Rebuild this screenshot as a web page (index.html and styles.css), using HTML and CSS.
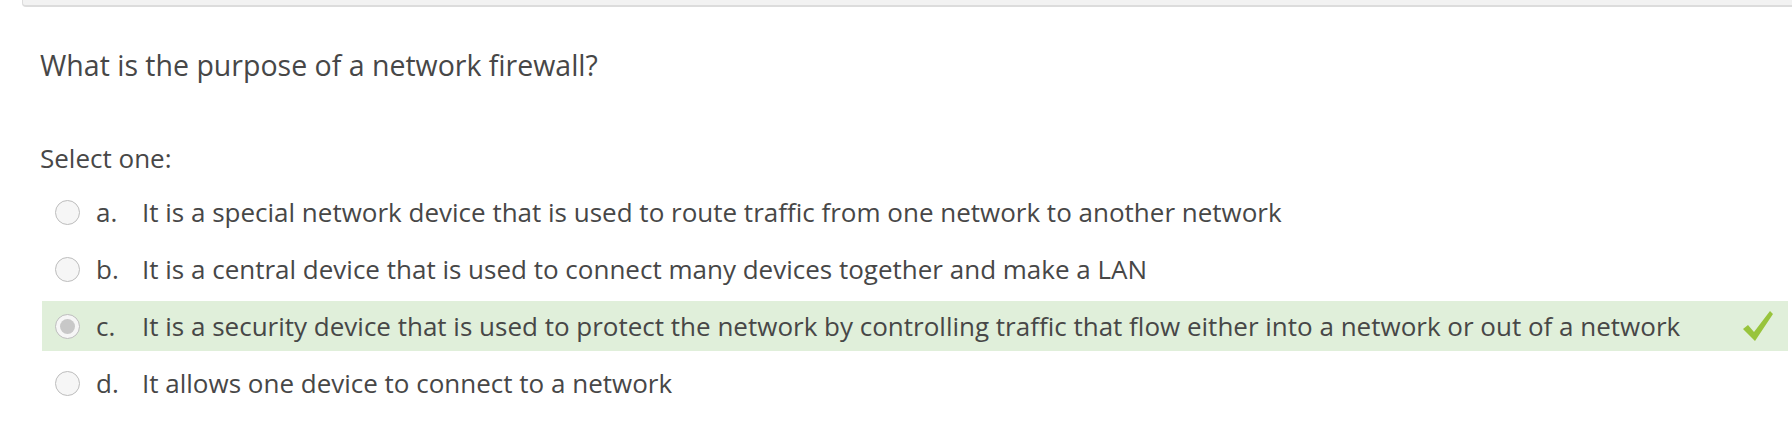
FILE: index.html
```html
<!DOCTYPE html>
<html>
<head>
<meta charset="utf-8">
<link rel="stylesheet" href="styles.css">
</head>
<body>
<div class="topbar"></div>
<div class="content">
  <div class="qtext">What is the purpose of a network firewall?</div>
  <div class="prompt">Select one:</div>
  <div class="answers">
    <div class="answer">
      <span class="radio"></span><span class="label">a.</span><span class="txt">It is a special network device that is used to route traffic from one network to another network</span>
    </div>
    <div class="answer">
      <span class="radio"></span><span class="label">b.</span><span class="txt">It is a central device that is used to connect many devices together and make a LAN</span>
    </div>
    <div class="answer correct">
      <span class="radio checked"></span><span class="label">c.</span><span class="txt">It is a security device that is used to protect the network by controlling traffic that flow either into a network or out of a network</span>
      <svg class="tick" width="32" height="32" viewBox="0 0 32 32"><path d="M1 19 L6 15 L12 22 L28 1 L31 4 L13 31 Z" fill="#98c43c"/></svg>
    </div>
    <div class="answer">
      <span class="radio"></span><span class="label">d.</span><span class="txt">It allows one device to connect to a network</span>
    </div>
  </div>
</div>
</body>
</html>
```
FILE: styles.css
```css
html, body {
  margin: 0;
  padding: 0;
  background: #fff;
}
body {
  font-family: "Open Sans", "Liberation Sans", sans-serif;
  color: #474747;
}
.topbar {
  margin-left: 22px;
  height: 5px;
  background: #f2f2f2;
  border-left: 1px solid #dcdcdc;
  border-bottom: 2px solid #dcdcdc;
  border-bottom-left-radius: 4px;
}
.content {
  padding-left: 40px;
}
.qtext {
  font-size: 28.5px;
  line-height: 40px;
  margin-top: 38px;
}
.prompt {
  font-size: 26px;
  line-height: 36px;
  margin-top: 55px;
}
.answers {
  display: flex;
  flex-direction: column;
  gap: 7px;
  margin-top: 11px;
  margin-left: 2px;
  margin-right: 4px;
}
.answer {
  display: flex;
  align-items: center;
  height: 50px;
  padding-left: 13px;
  font-size: 26px;
}
.answer.correct {
  background: #e0efda;
}
.radio {
  width: 23px;
  height: 23px;
  border: 1px solid #bdbdbd;
  border-radius: 50%;
  background: #f6f6f6;
  flex: none;
  position: relative;
}
.radio.checked::after {
  content: "";
  position: absolute;
  left: 4px;
  top: 4px;
  width: 15px;
  height: 15px;
  border-radius: 50%;
  background: #c8c8c8;
}
.label {
  width: 46px;
  margin-left: 16px;
  flex: none;
}
.txt {
  flex: 1;
}
.tick {
  margin-right: 14px;
  flex: none;
}
```
